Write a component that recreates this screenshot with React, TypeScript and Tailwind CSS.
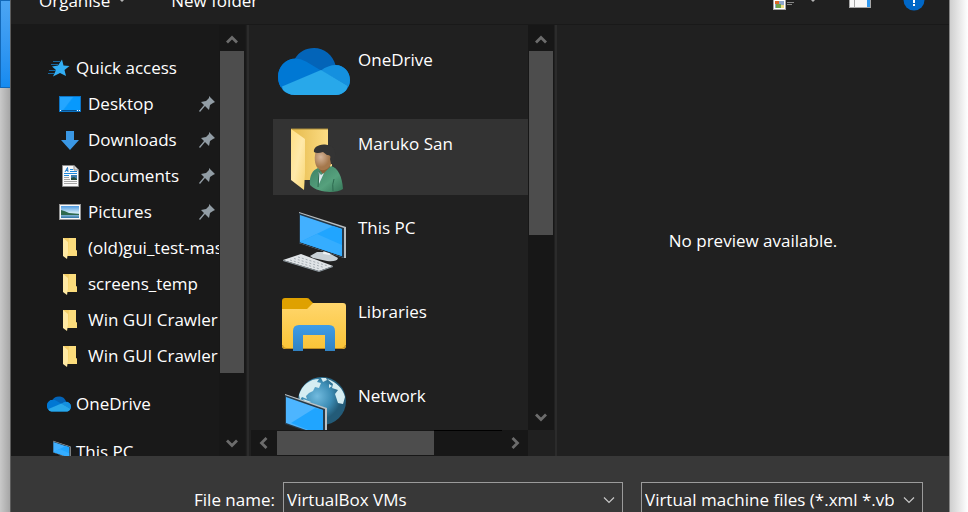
import React from "react";

type IconProps = { className?: string; viewBox?: string };

function CloudIcon({ className, viewBox = "0 0 72 47" }: IconProps) {
  return (
    <svg className={className} viewBox={viewBox} aria-hidden="true">
      <defs>
        <clipPath id="cloud-shape">
          <path d="M17 47C7 47 0 39 0 29C0 19 7 11 17 10.500C21 4 28 0 36 0C46 0 55 7 57.500 17C66 17 72 24 72 32C72 40 66 47 58 47Z" />
        </clipPath>
      </defs>
      <g clipPath="url(#cloud-shape)">
        <rect width="72" height="47" fill="#0364b8" />
        <path d="M0 8L17 10.500Q23 10.500 28 13.500L43 22.500L4 39L0 41Z" fill="#0078d4" />
        <path d="M43 22.500Q50 17 58 17L74 15V41L70 38Z" fill="#1490df" />
        <path d="M4 38.500L43 22L70 38L66 48H6Z" fill="#28a8ea" />
      </g>
    </svg>
  );
}

function StarIcon({ className }: IconProps) {
  return (
    <svg className={className} viewBox="0 0 22 18" aria-hidden="true">
      <path d="M14 0.500L15.500 6.500L21.500 7L16.500 11L18 17L12 14L5 17.500L8 11L4 7.500L10 6.500Z" fill="#32aef4" />
      <path d="M5 2.500H12M3 5.500H10M1 11.500H8M0 14.500H6" stroke="#17679f" strokeWidth="1" />
    </svg>
  );
}

function DesktopIcon({ className }: IconProps) {
  return (
    <svg className={className} viewBox="0 0 22 16" aria-hidden="true">
      <rect width="22" height="16" fill="#0d74c4" />
      <rect x="1" y="1" width="20" height="13" fill="#139cf9" />
      <path d="M1 1H14L4 14H1Z" fill="#24a6ff" />
      <path d="M15 1H21V14H5Z" fill="#0799fd" />
      <path d="M1 14.500H2M18 14.500H19M20 14.500H21" stroke="#fff" />
      <path d="M3 14.500H17" stroke="#064f8c" />
    </svg>
  );
}

function DownloadIcon({ className }: IconProps) {
  return (
    <svg className={className} viewBox="0 0 18 19" aria-hidden="true">
      <path d="M5 0H13V9H18L9 19L0 9H5Z" fill="#3a97e4" />
    </svg>
  );
}

function DocumentIcon({ className }: IconProps) {
  return (
    <svg className={className} viewBox="0 0 17 22" aria-hidden="true">
      <path d="M0.500 0.500H12L16.500 5V21.500H0.500Z" fill="#fafafa" stroke="#8d8d8d" />
      <path d="M12 0.500V5H16.500" fill="#ddd" stroke="#8d8d8d" />
      <path d="M3 7L5.500 2.500L6 7M4 5.500H6" stroke="#1e79c8" fill="none" />
      <path d="M8 4.500H11M8 6.500H15M2 8.500H15M2 10.500H7" stroke="#1e88dc" />
      <path d="M2 12.500H7M2 14.500H8M2 16.500H15M2 18.500H15" stroke="#a5a5a5" />
      <rect x="9" y="10" width="6" height="5" fill="#3c7cad" />
      <path d="M9 13L12 12L15 14V15H9Z" fill="#254b3c" />
    </svg>
  );
}

function PictureIcon({ className }: IconProps) {
  return (
    <svg className={className} viewBox="0 0 22 16" aria-hidden="true">
      <defs>
        <linearGradient id="photo-sky" x2="0" y2="1">
          <stop stopColor="#4f9be2" />
          <stop offset="0.550" stopColor="#cde8f4" />
          <stop offset="1" stopColor="#2c73a5" />
        </linearGradient>
      </defs>
      <rect x="0.500" y="0.500" width="21" height="15" fill="#f8f8f8" stroke="#969696" />
      <rect x="2" y="2" width="18" height="12" fill="url(#photo-sky)" />
      <path d="M2 6Q6 7 10 9L20 10V11H2Z" fill="#2e694d" />
    </svg>
  );
}

function SmallFolderIcon({ className }: IconProps) {
  return (
    <svg className={className} viewBox="0 0 14 21" aria-hidden="true">
      <path d="M0 0H13V12L14 13V18H0Z" fill="#f4cf69" />
      <path d="M6 0H13V12L14 13V18H5Z" fill="#fbdc7c" />
      <path d="M0 0L5 4V15L4 21L0 18Z" fill="#ffe9a3" />
    </svg>
  );
}

function UserFolderIcon({ className, viewBox = "0 0 54 64" }: IconProps) {
  return (
    <svg className={className} viewBox={viewBox} aria-hidden="true">
      <defs>
        <linearGradient id="folder-back" x2="1">
          <stop stopColor="#e5ba4c" />
          <stop offset="1" stopColor="#ffe08a" />
        </linearGradient>
        <linearGradient id="folder-front" x2="1" y2="1">
          <stop stopColor="#ffdf84" />
          <stop offset="0.500" stopColor="#ffe9aa" />
          <stop offset="1" stopColor="#f8d674" />
        </linearGradient>
        <radialGradient id="face" cx="0.350" cy="0.350">
          <stop stopColor="#d5b59a" />
          <stop offset="1" stopColor="#a5784c" />
        </radialGradient>
        <linearGradient id="jacket" x2="1" y2="1">
          <stop stopColor="#3c8064" />
          <stop offset="0.600" stopColor="#56a17d" />
          <stop offset="1" stopColor="#347456" />
        </linearGradient>
      </defs>
      <path d="M1 1H38V32L42 36V52H1Z" fill="url(#folder-back)" />
      <path d="M1 1H38" stroke="#aa8c3b" />
      <path d="M1 1L15 11V45L14 62L1 52Z" fill="url(#folder-front)" />
      <path d="M32 32H40V42L33 50L28 42Z" fill="#896038" />
      <path d="M26 22H42V33C41 39 36 43 31 42C26 41 24 34 25 27Z" fill="url(#face)" />
      <path d="M24 24C23 20 28 16 35 16.500C43 17 46 22 45 28C45 33 44 37 41 36L40 31C41 28 40 27 37 27L33 24Q27 26 24 24Z" fill="#343434" />
      <path d="M20 57C19 47 23 42 28 40L33 46L41 38C48 40 52 48 53 61C47 65 29 66 20 57Z" fill="url(#jacket)" />
      <path d="M28 43L31 47L34 45L29 56Z" fill="#dce9ed" />
      <path d="M29 43L28 59M44 51Q42 56 43 63" stroke="#2c694f" fill="none" />
    </svg>
  );
}

function ComputerIcon({ className, viewBox = "0 0 64 60" }: IconProps) {
  return (
    <svg className={className} viewBox={viewBox} aria-hidden="true">
      <path d="M27 44L34 40L44 40L55 46Q54 50 44 49L30 46Z" fill="#c8d0d5" />
      <path d="M41 37L47 39V43L40 42Z" fill="#edf1f3" />
      <path d="M16 0L63 15V46L61 46L16 31Z" fill="#b8bec1" />
      <path d="M16 1L61 16V46L16 31Z" fill="#253746" />
      <path d="M17 3L59 17V44L17 30Z" fill="#42b0ff" />
      <path d="M50 14L59 17V44L17 30Z" fill="#20a5ff" />
      <path d="M17 30L34 22L59 33V44Z" fill="#35adff" />
      <path d="M0 48L18 42L50 54L36 59Z" fill="#e0e4e7" />
      <path d="M0 48V49L36 60L50 55V54L36 59Z" fill="#909ba2" />
      <path d="M7 48L37 57M11 46.500L41 55.500M15 45L45 54" stroke="#a5adb3" strokeWidth="1" strokeDasharray="2 2" />
    </svg>
  );
}

function LibrariesIcon({ className, viewBox = "0 0 64 53" }: IconProps) {
  return (
    <svg className={className} viewBox={viewBox} aria-hidden="true">
      <defs>
        <linearGradient id="library-front" x2="0" y2="1">
          <stop stopColor="#ffd66c" />
          <stop offset="1" stopColor="#fac437" />
        </linearGradient>
        <linearGradient id="library-stand" x2="0" y2="1">
          <stop stopColor="#3e9de7" />
          <stop offset="1" stopColor="#3182c2" />
        </linearGradient>
      </defs>
      <path d="M0 3Q0 0 3 0H25Q27 0 28 2L31 5V20H0Z" fill="#dfa100" />
      <path d="M0 11H25L31 5H61Q64 5 64 8V48Q64 51 61 51H3Q0 51 0 48Z" fill="url(#library-front)" />
      <path d="M0.500 47Q0.500 50.500 4 50.500H60Q63.500 50.500 63.500 47" fill="none" stroke="#bd8b21" />
      <path d="M11 53V33Q11 27 17 27H47Q53 27 53 33V53H43V37H21V53Z" fill="url(#library-stand)" />
    </svg>
  );
}

function NetworkIcon({ className, viewBox = "0 0 62 62" }: IconProps) {
  return (
    <svg className={className} viewBox={viewBox} aria-hidden="true">
      <defs>
        <radialGradient id="globe" cx="0.400" cy="0.400">
          <stop stopColor="#72bbdf" />
          <stop offset="0.600" stopColor="#3d8db5" />
          <stop offset="1" stopColor="#235b78" />
        </radialGradient>
      </defs>
      <circle cx="37" cy="24" r="24" fill="url(#globe)" />
      <path d="M14 18C17 8 25 2 34 2L32 5L36 6L34 11L30 10L28 14L24 16L21 19L22 22L17 20L15 23ZM42 2C52 5 58 12 60 20L58 27L53 26L50 17L53 13L47 11L48 7ZM18 22L26 25L22 27Z" fill="#d5edf2" />
      <path d="M36 1L41 1L42 3L38 5ZM44 7L47 9L44 11Z" fill="#d5edf2" />
      <path d="M0 17L42 31V61L0 46Z" fill="#bdc2c5" />
      <path d="M0 18L40 32V61L0 47Z" fill="#283b49" />
      <path d="M1 20L38 33V59L1 46Z" fill="#4db5ff" />
      <path d="M30 31L38 33V59L6 46Z" fill="#20a5ff" />
    </svg>
  );
}

function PinIcon() {
  return (
    <svg className="h-4 w-4 shrink-0" viewBox="0 0 16 16" aria-hidden="true">
      <path d="M10 0L16 6L14 7L11 9L10 14L6 10L1 16L0 15L5 9L2 6L7 5L10 2Z" fill="#929da5" />
    </svg>
  );
}

function Chevron({ turn, thin }: { turn?: string; thin?: boolean }) {
  return (
    <svg className={`h-3 w-3 ${turn ?? ""}`} viewBox="0 0 12 12" fill="none" aria-hidden="true">
      <path
        d={thin ? "M1 3.500L6 8.500L11 3.500" : "M1 3.500L6 8.500L11 3.500"}
        stroke={thin ? "#c8c8c8" : "#6c6c6c"}
        strokeWidth={thin ? 1.2 : 2.8}
      />
    </svg>
  );
}

const scrollButton = "flex shrink-0 items-center justify-center";

function VerticalScrollbar({ thumb, end }: { thumb: string; end: string }) {
  return (
    <div className="flex w-[26px] shrink-0 flex-col bg-[#171717] px-px">
      <button aria-label="Scroll up" className={`${scrollButton} h-[26px] pt-1`}>
        <Chevron turn="rotate-180" />
      </button>
      <div className="min-h-0 flex-1">
        <div className={`bg-[#4d4d4d] ${thumb}`} />
      </div>
      <button aria-label="Scroll down" className={`${scrollButton} ${end}`}>
        <Chevron />
      </button>
    </div>
  );
}

type Shortcut = { name: string; icon: React.ReactNode; pinned?: boolean };

const folder = <SmallFolderIcon className="h-[21px] w-[14px]" />;

const shortcuts: Shortcut[] = [
  { name: "Desktop", icon: <DesktopIcon className="h-4 w-[22px]" />, pinned: true },
  { name: "Downloads", icon: <DownloadIcon className="h-[19px] w-[18px]" />, pinned: true },
  { name: "Documents", icon: <DocumentIcon className="h-[22px] w-[17px]" />, pinned: true },
  { name: "Pictures", icon: <PictureIcon className="h-4 w-[22px]" />, pinned: true },
  { name: "(old)gui_test-master", icon: folder },
  { name: "screens_temp", icon: folder },
  { name: "Win GUI Crawler", icon: folder },
  { name: "Win GUI Crawler", icon: folder },
];

function TreeRoot({ name, icon }: Shortcut) {
  return (
    <button className="flex h-9 w-full shrink-0 items-center pl-9 text-left whitespace-nowrap">
      <span className="flex w-6 shrink-0 justify-center">{icon}</span>
      <span className="pl-[5px]">{name}</span>
    </button>
  );
}

function Sidebar() {
  return (
    <nav aria-label="Folders" className="flex w-[235px] shrink-0 bg-[#191919] pr-px">
      <div className="flex min-w-0 flex-1 flex-col gap-3 overflow-hidden pt-[25px]">
        <div>
          <TreeRoot name="Quick access" icon={<StarIcon className="h-[18px] w-[22px]" />} />
          {shortcuts.map((item, i) => (
            <button key={i} className="flex h-9 w-full items-center pr-1 pl-12 text-left whitespace-nowrap">
              <span className="flex w-[22px] shrink-0 justify-center">{item.icon}</span>
              <span className="min-w-0 flex-1 pl-[7px]">{item.name}</span>
              {item.pinned && <PinIcon />}
            </button>
          ))}
        </div>
        <TreeRoot name="OneDrive" icon={<CloudIcon className="h-4 w-6" />} />
        <TreeRoot name="This PC" icon={<ComputerIcon className="h-6 w-6" />} />
      </div>
      <VerticalScrollbar thumb="h-[322px]" end="h-[26px]" />
    </nav>
  );
}

const tile = "h-[76px] w-20";

const places = [
  { name: "OneDrive", icon: <CloudIcon className={tile} viewBox="-4 -13 80 76" /> },
  { name: "Maruko San", icon: <UserFolderIcon className={tile} viewBox="-16 -9 80 76" />, selected: true },
  { name: "This PC", icon: <ComputerIcon className={tile} viewBox="-9 -9 80 76" /> },
  { name: "Libraries", icon: <LibrariesIcon className={tile} viewBox="-8 -11 80 76" /> },
  { name: "Network", icon: <NetworkIcon className={tile} viewBox="-11 -6 80 76" /> },
];

function FileList() {
  return (
    <main className="flex w-[305px] shrink-0 flex-col">
      <div className="flex min-h-0 flex-1">
        <div className="flex min-w-0 flex-1 flex-col gap-2 overflow-hidden pt-[10px] pl-6">
          {places.map((place) => (
            <button
              key={place.name}
              className={`flex h-[76px] shrink-0 pl-px text-left ${place.selected ? "bg-[#333333]" : ""}`}
            >
              {place.icon}
              <span className="pt-[13px] pl-1">{place.name}</span>
            </button>
          ))}
        </div>
        <VerticalScrollbar thumb="h-[184px]" end="h-[26px]" />
      </div>
      <div className="flex h-[26px] shrink-0 pr-[26px] pl-[2px]">
        <div className="flex flex-1 bg-[#171717]">
          <button aria-label="Scroll left" className={`${scrollButton} w-[26px]`}>
            <Chevron turn="rotate-90" />
          </button>
          <div className="flex flex-1">
            <div className="mt-px h-6 w-[157px] bg-[#4d4d4d]" />
            <div className="h-px flex-1 bg-black" />
          </div>
          <button aria-label="Scroll right" className={`${scrollButton} w-[26px]`}>
            <Chevron turn="-rotate-90" />
          </button>
        </div>
      </div>
    </main>
  );
}

function Toolbar() {
  return (
    <header className="h-[25px] shrink-0 overflow-hidden border-b border-[#191919]">
      <div className="-mt-[17px] flex h-9 items-center pr-6 pl-7">
        <button className="flex items-center gap-2">
          Organise
          <svg className="h-[6px] w-2" viewBox="0 0 8 6" aria-hidden="true">
            <path d="M0 0H8L4 4Z" fill="#b5b5b5" />
          </svg>
        </button>
        <button className="ml-[45px]">New folder</button>
        <button aria-label="Change view" className="ml-auto flex items-center gap-[14px]">
          <svg className="h-[18px] w-[22px]" viewBox="0 0 22 18" aria-hidden="true">
            <rect x="0.500" y="0.500" width="12" height="17" fill="#fff" stroke="#a5a5a5" />
            <rect x="2" y="9" width="9" height="7" fill="#8ea5ca" />
            <path d="M2 9H6V12H2Z" fill="#d96727" />
            <path d="M3 12H8V16H3Z" fill="#6ca048" />
            <path d="M8 13H11V16H8Z" fill="#eedd83" />
            <path d="M14 10.500H21M14 12.500H19" stroke="#858585" />
          </svg>
          <svg className="h-[6px] w-2" viewBox="0 0 8 6" aria-hidden="true">
            <path d="M0 0H8L4 4Z" fill="#b5b5b5" />
          </svg>
        </button>
        <button aria-label="Preview pane" className="ml-8">
          <svg className="h-4 w-[22px]" viewBox="0 0 22 16" aria-hidden="true">
            <rect x="0.500" y="0.500" width="21" height="14" fill="#f7f7f7" stroke="#a5a5a5" />
            <path d="M5.500 1V14" stroke="#a5a5a5" />
            <rect x="18" y="1" width="3" height="13" fill="#3199ef" />
          </svg>
        </button>
        <button aria-label="Help" className="ml-8">
          <svg className="h-[22px] w-[22px]" viewBox="0 0 22 22" aria-hidden="true">
            <circle cx="11" cy="10" r="10.500" fill="#0067c7" />
            <path d="M8 5Q11 2 13 5Q14 8 11 9V13" fill="none" stroke="#fff" strokeWidth="2" />
            <rect x="10" y="14" width="2" height="2" fill="#fff" />
          </svg>
        </button>
      </div>
    </header>
  );
}

function Footer() {
  return (
    <footer className="flex h-14 shrink-0 items-start bg-[#383838] pt-[26px] pr-[26px]">
      <label htmlFor="file-name" className="w-[272px] shrink-0 pr-2 text-right leading-9">
        File name:
      </label>
      <div className="flex h-9 min-w-0 flex-1 border border-[#9b9b9b]">
        <input
          id="file-name"
          defaultValue="VirtualBox VMs"
          className="min-w-0 flex-1 bg-transparent pl-[3px] outline-none"
        />
        <button aria-label="Recent names" className="flex w-[26px] items-center justify-center">
          <Chevron thin />
        </button>
      </div>
      <div className="ml-[18px] flex h-9 w-[282px] shrink-0 border border-[#9b9b9b] bg-[#333333]">
        <div className="grid w-full grid-cols-[1fr_26px] items-center">
          <select
            aria-label="File type"
            className="col-span-2 col-start-1 row-start-1 h-full w-full min-w-0 appearance-none bg-transparent pr-7 pl-[3px] outline-none"
          >
            <option>Virtual machine files (*.xml *.vbox)</option>
          </select>
          <span className="pointer-events-none col-start-2 row-start-1 flex justify-center">
            <Chevron thin />
          </span>
        </div>
      </div>
    </footer>
  );
}

export default function App() {
  return (
    <div className="flex h-screen overflow-hidden bg-white font-['Open_Sans','Noto_Sans',sans-serif] text-[17px] leading-6 text-white">
      <div className="flex w-[10px] shrink-0 flex-col bg-linear-to-r from-[#c9c9c9] to-[#a6a6a6]">
        <div className="h-[88px] border-y border-l border-[#1268b8] bg-linear-to-b from-[#4ba5f3] to-[#158bf0]" />
      </div>
      <div className="flex min-w-0 flex-1 flex-col border-x border-l-[#5c5c5c] border-r-[#858585] bg-[#202020]">
        <Toolbar />
        <div className="flex min-h-0 flex-1">
          <Sidebar />
          <div className="ml-px w-[2px] shrink-0 bg-[#2b2b2b]" />
          <FileList />
          <div className="ml-px w-[2px] shrink-0 bg-[#2b2b2b]" />
          <aside className="flex min-w-0 flex-1 items-center justify-center px-4 text-center">
            No preview available.
          </aside>
        </div>
        <Footer />
      </div>
      <div className="w-[18px] shrink-0 bg-linear-to-r from-[#cfcfcf] to-white" />
    </div>
  );
}
